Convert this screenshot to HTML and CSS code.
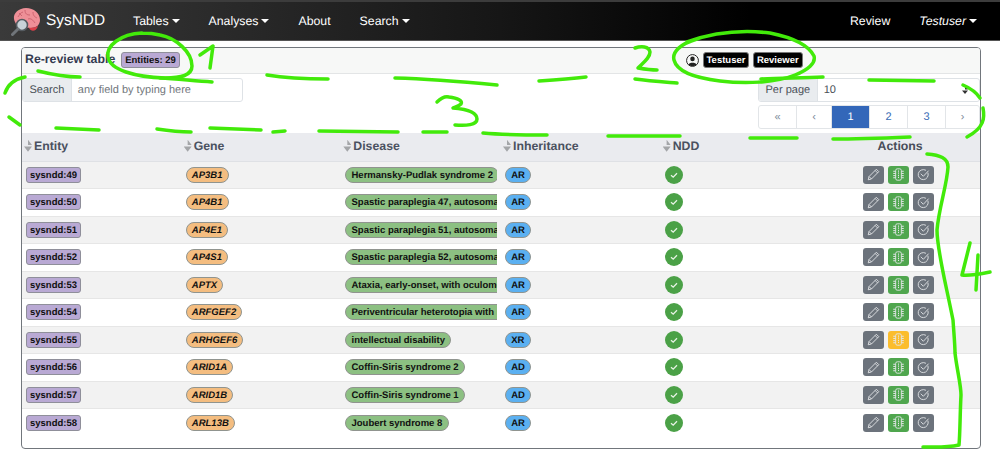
FILE: index.html
```html
<!DOCTYPE html>
<html lang="en">
<head>
<meta charset="UTF-8" />
<meta name="viewport" content="width=device-width, initial-scale=1" />
<title>SysNDD - Re-review table</title>
<link rel="stylesheet" href="styles.css">
</head>
<body>

<svg class="icon-defs" width="0" height="0">
  <symbol id="pencil" viewBox="0 0 16 16">
    <path d="M11.5 1.5 14.5 4.5 5.5 13.5 1.5 14.5 2.5 10.5Z M2.5 10.5 5.5 13.5 M10 3 13 6" fill="none" stroke="currentColor" stroke-width="1.1" stroke-linejoin="round"/>
  </symbol>
  <symbol id="chip" viewBox="0 0 16 16">
    <rect x="4.5" y="1" width="7" height="14" rx="2" fill="none" stroke="currentColor" stroke-width="1.1"/>
    <path d="M8 3V13" stroke="currentColor" stroke-width="1.3" stroke-dasharray="1.5 1.1"/>
    <path d="M1.5 4H4.5 M1.5 6.7H4.5 M1.5 9.4H4.5 M1.5 12H4.5 M11.5 4H14.5 M11.5 6.7H14.5 M11.5 9.4H14.5 M11.5 12H14.5" stroke="currentColor" stroke-width="1.2"/>
  </symbol>
  <symbol id="checkcircle" viewBox="0 0 16 16">
    <path d="M13.6 6.2A6.2 6.2 0 1 1 10.6 2.6" fill="none" stroke="currentColor" stroke-width="1.1" stroke-linecap="round"/>
    <path d="M5 7.4 7.8 10.2 14 3.6" fill="none" stroke="currentColor" stroke-width="1.1" stroke-linecap="round"/>
  </symbol>
  <symbol id="tick" viewBox="0 0 18 18">
    <circle cx="9" cy="9" r="9" fill="#4ba147"/>
    <path d="M6 9.2 8.2 11.2 12 7.2" fill="none" stroke="#e8f3e6" stroke-width="1.3"/>
  </symbol>
</svg>

<nav class="navbar">
  <a class="brand">
    <svg class="logo" viewBox="0 0 30 30" width="30" height="30">
      <path d="M3 13C2 7 8 2 15 2 23 2 29 7 29 14 29 19 25 22 20 22L11 21C7 21 4 18 3 13Z" fill="#ee8f97"/>
      <path d="M18 22C20 26 25 26 27 20 25 21 21 22 18 22Z" fill="#d8404a"/>
      <path d="M7 11C9 8 9 7 12 6M14 4C14 8 16 9 19 9M22 6C22 10 24 11 26 12M17 13C20 12 22 14 24 17M8 7 11 10" fill="none" stroke="#c8606c" stroke-width="0.9"/>
      <circle cx="11" cy="19" r="5.5" fill="#c8d2d8" stroke="#555b60" stroke-width="1.6"/>
      <path d="M7 23 1.5 28.5" stroke="#70757a" stroke-width="3" stroke-linecap="round"/>
    </svg>
    <span>SysNDD</span>
  </a>
  <ul class="nav-left">
    <li class="caret">Tables</li>
    <li class="caret">Analyses</li>
    <li>About</li>
    <li class="caret">Search</li>
  </ul>
  <ul class="nav-right">
    <li>Review</li>
    <li class="caret user">Testuser</li>
  </ul>
</nav>

<main class="page">
  <section class="card">
    <header class="card-head">
      <div class="title">
        <h6>Re-review table</h6>
        <span class="badge purple">Entities: 29</span>
      </div>
      <div class="who">
        <svg class="person" viewBox="0 0 16 16" width="13" height="13">
          <circle cx="8" cy="8" r="7.3" fill="none" stroke="#222" stroke-width="1.2"/>
          <circle cx="8" cy="6" r="2.8" fill="#222"/>
          <path d="M3 13C4 10 12 10 13 13 11 15.5 5 15.5 3 13Z" fill="#222"/>
        </svg>
        <span class="badge black">Testuser</span>
        <span class="badge black">Reviewer</span>
      </div>
    </header>

    <div class="controls">
      <div class="input-group search">
        <span class="addon">Search</span>
        <span class="field placeholder">any field by typing here</span>
      </div>
      <div class="paging">
        <div class="input-group">
          <span class="addon">Per page</span>
          <span class="field select">10</span>
        </div>
        <ul class="pagination">
          <li class="muted">«</li>
          <li class="muted">‹</li>
          <li class="active">1</li>
          <li>2</li>
          <li>3</li>
          <li class="muted">›</li>
        </ul>
      </div>
    </div>

    <table class="entities">
      <thead>
        <tr>
          <th><span class="sort">Entity</span></th>
          <th><span class="sort">Gene</span></th>
          <th><span class="sort">Disease</span></th>
          <th><span class="sort">Inheritance</span></th>
          <th><span class="sort">NDD</span></th>
          <th class="center">Actions</th>
        </tr>
      </thead>
      <tbody>
        <tr>
          <td><span class="badge purple">sysndd:49</span></td>
          <td><span class="pill orange">AP3B1</span></td>
          <td><div class="clip"><span class="pill green">Hermansky-Pudlak syndrome 2</span></div></td>
          <td><span class="pill blue">AR</span></td>
          <td><svg class="tick"><use href="#tick"/></svg></td>
          <td class="center"><div class="actions"><span class="btn gray"><svg><use href="#pencil"/></svg></span><span class="btn ok"><svg><use href="#chip"/></svg></span><span class="btn gray"><svg><use href="#checkcircle"/></svg></span></div></td>
        </tr>
        <tr>
          <td><span class="badge purple">sysndd:50</span></td>
          <td><span class="pill orange">AP4B1</span></td>
          <td><div class="clip"><span class="pill green">Spastic paraplegia 47, autosomal recessive</span></div></td>
          <td><span class="pill blue">AR</span></td>
          <td><svg class="tick"><use href="#tick"/></svg></td>
          <td class="center"><div class="actions"><span class="btn gray"><svg><use href="#pencil"/></svg></span><span class="btn ok"><svg><use href="#chip"/></svg></span><span class="btn gray"><svg><use href="#checkcircle"/></svg></span></div></td>
        </tr>
        <tr>
          <td><span class="badge purple">sysndd:51</span></td>
          <td><span class="pill orange">AP4E1</span></td>
          <td><div class="clip"><span class="pill green">Spastic paraplegia 51, autosomal recessive</span></div></td>
          <td><span class="pill blue">AR</span></td>
          <td><svg class="tick"><use href="#tick"/></svg></td>
          <td class="center"><div class="actions"><span class="btn gray"><svg><use href="#pencil"/></svg></span><span class="btn ok"><svg><use href="#chip"/></svg></span><span class="btn gray"><svg><use href="#checkcircle"/></svg></span></div></td>
        </tr>
        <tr>
          <td><span class="badge purple">sysndd:52</span></td>
          <td><span class="pill orange">AP4S1</span></td>
          <td><div class="clip"><span class="pill green">Spastic paraplegia 52, autosomal recessive</span></div></td>
          <td><span class="pill blue">AR</span></td>
          <td><svg class="tick"><use href="#tick"/></svg></td>
          <td class="center"><div class="actions"><span class="btn gray"><svg><use href="#pencil"/></svg></span><span class="btn ok"><svg><use href="#chip"/></svg></span><span class="btn gray"><svg><use href="#checkcircle"/></svg></span></div></td>
        </tr>
        <tr>
          <td><span class="badge purple">sysndd:53</span></td>
          <td><span class="pill orange">APTX</span></td>
          <td><div class="clip"><span class="pill green">Ataxia, early-onset, with oculomotor apraxia</span></div></td>
          <td><span class="pill blue">AR</span></td>
          <td><svg class="tick"><use href="#tick"/></svg></td>
          <td class="center"><div class="actions"><span class="btn gray"><svg><use href="#pencil"/></svg></span><span class="btn ok"><svg><use href="#chip"/></svg></span><span class="btn gray"><svg><use href="#checkcircle"/></svg></span></div></td>
        </tr>
        <tr>
          <td><span class="badge purple">sysndd:54</span></td>
          <td><span class="pill orange">ARFGEF2</span></td>
          <td><div class="clip"><span class="pill green">Periventricular heterotopia with microcephaly</span></div></td>
          <td><span class="pill blue">AR</span></td>
          <td><svg class="tick"><use href="#tick"/></svg></td>
          <td class="center"><div class="actions"><span class="btn gray"><svg><use href="#pencil"/></svg></span><span class="btn ok"><svg><use href="#chip"/></svg></span><span class="btn gray"><svg><use href="#checkcircle"/></svg></span></div></td>
        </tr>
        <tr>
          <td><span class="badge purple">sysndd:55</span></td>
          <td><span class="pill orange">ARHGEF6</span></td>
          <td><div class="clip"><span class="pill green">intellectual disability</span></div></td>
          <td><span class="pill blue">XR</span></td>
          <td><svg class="tick"><use href="#tick"/></svg></td>
          <td class="center"><div class="actions"><span class="btn gray"><svg><use href="#pencil"/></svg></span><span class="btn warn"><svg><use href="#chip"/></svg></span><span class="btn gray"><svg><use href="#checkcircle"/></svg></span></div></td>
        </tr>
        <tr>
          <td><span class="badge purple">sysndd:56</span></td>
          <td><span class="pill orange">ARID1A</span></td>
          <td><div class="clip"><span class="pill green">Coffin-Siris syndrome 2</span></div></td>
          <td><span class="pill blue">AD</span></td>
          <td><svg class="tick"><use href="#tick"/></svg></td>
          <td class="center"><div class="actions"><span class="btn gray"><svg><use href="#pencil"/></svg></span><span class="btn ok"><svg><use href="#chip"/></svg></span><span class="btn gray"><svg><use href="#checkcircle"/></svg></span></div></td>
        </tr>
        <tr>
          <td><span class="badge purple">sysndd:57</span></td>
          <td><span class="pill orange">ARID1B</span></td>
          <td><div class="clip"><span class="pill green">Coffin-Siris syndrome 1</span></div></td>
          <td><span class="pill blue">AD</span></td>
          <td><svg class="tick"><use href="#tick"/></svg></td>
          <td class="center"><div class="actions"><span class="btn gray"><svg><use href="#pencil"/></svg></span><span class="btn ok"><svg><use href="#chip"/></svg></span><span class="btn gray"><svg><use href="#checkcircle"/></svg></span></div></td>
        </tr>
        <tr>
          <td><span class="badge purple">sysndd:58</span></td>
          <td><span class="pill orange">ARL13B</span></td>
          <td><div class="clip"><span class="pill green">Joubert syndrome 8</span></div></td>
          <td><span class="pill blue">AR</span></td>
          <td><svg class="tick"><use href="#tick"/></svg></td>
          <td class="center"><div class="actions"><span class="btn gray"><svg><use href="#pencil"/></svg></span><span class="btn ok"><svg><use href="#chip"/></svg></span><span class="btn gray"><svg><use href="#checkcircle"/></svg></span></div></td>
        </tr>
      </tbody>
    </table>
  </section>
</main>

<!-- hand drawn marker scribbles on top of the screenshot -->
<svg class="scribbles" viewBox="0 0 1000 474" width="1000" height="474">
  <path d="M142 33C120 34 106 46 108 57 110 70 135 77 165 78 180 78 192 76 192 66 192 52 176 38 160 35 152 33 146 33 142 33"/>
  <path d="M200 55 213 46 210 68"/>
  <path d="M38 71C50 74 65 77 80 77"/>
  <path d="M160 78C178 79 195 81 212 82"/>
  <path d="M267 75C285 78 308 79 328 79"/>
  <path d="M395 78C430 79 465 82 497 85"/>
  <path d="M25 77C15 79 8 84 5 93"/>
  <path d="M9 117 20 125"/>
  <path d="M56 128 99 130"/>
  <path d="M157 129C170 131 180 132 191 132"/>
  <path d="M210 128 261 130"/>
  <path d="M273 132 285 131"/>
  <path d="M319 131 398 132"/>
  <path d="M423 132 447 132"/>
  <path d="M483 133C505 135 525 135 547 135"/>
  <path d="M608 136 680 136"/>
  <path d="M750 138 797 138"/>
  <path d="M833 139C860 139 885 138 910 137"/>
  <path d="M437 102C441 98 445 96 449 97 458 98 463 101 461 104 459 106 455 107 453 108 465 109 477 112 477 119 477 125 466 126 455 125"/>
  <path d="M539 81C555 80 570 79 586 77"/>
  <path d="M635 79C650 81 665 82 677 83"/>
  <path d="M761 79C780 78 800 78 823 77"/>
  <path d="M869 80 934 81"/>
  <path d="M963 85C970 88 976 92 980 98"/>
  <path d="M983 108C985 118 984 128 967 137"/>
  <path d="M697 39C680 44 672 52 674 60 677 72 695 78 720 81 745 84 775 83 795 75 808 70 816 63 814 56 808 44 790 37 770 33 745 30 715 32 687 42"/>
  <path d="M635 48C641 46 649 46 650 52 650 58 643 63 638 68 644 69 650 70 657 70"/>
  <path d="M927 154C940 155 948 158 948 167 947 185 939 207 937 230 937 250 945 280 953 320 954 335 955 345 955 353 957 370 961 385 961 395 960 415 960 435 959 445 945 448 935 447 923 447"/>
  <path d="M970 243 962 275C970 276 980 274 990 272"/>
  <path d="M978 255 976 290"/>
</svg>

</body>
</html>
```

FILE: styles.css
```css
* {
  box-sizing: border-box;
}
html, body {
  margin: 0;
  height: 474px;
  overflow: hidden;
}
body {
  position: relative;
  font-family: "Liberation Sans", Arial, sans-serif;
  font-size: 12.3px;
  color: #212529;
  background: white;
  text-rendering: geometricPrecision;
}
ul {
  list-style: none;
  margin: 0;
  padding: 0;
}
.icon-defs {
  position: absolute;
}

/* navbar */
.navbar {
  display: flex;
  align-items: center;
  height: 41px;
  padding: 0 23px 0 11px;
  color: white;
  background: linear-gradient(90deg, #3a3a3a 0%, #161616 50%, #000 75%);
  border-top: 2px solid #3c3c3c;
  border-bottom: 1px solid #555;
}
.brand {
  display: flex;
  align-items: center;
  gap: 5px;
  font-size: 15.4px;
  width: 122px;
}
.nav-left, .nav-right {
  display: flex;
  gap: 29px;
}
.nav-right {
  margin-left: auto;
}
.caret::after {
  content: "";
  display: inline-block;
  margin-left: 3px;
  vertical-align: 2px;
  border-top: 4px solid white;
  border-left: 4px solid transparent;
  border-right: 4px solid transparent;
}
.user {
  font-style: italic;
}

/* card */
.page {
  padding: 6px 19px 0 21px;
}
.card {
  height: 402px;
  border: 1px solid #71767c;
  border-radius: 4px;
  overflow: hidden;
}
.card-head {
  display: flex;
  align-items: flex-start;
  height: 26px;
  background: #f7f8f7;
  border-bottom: 1px solid #e3e5e6;
  padding: 4px 0 0 3px;
}
.title {
  display: flex;
  align-items: center;
  gap: 6px;
  width: 661px;
}
h6 {
  margin: -2px 0 0;
  font-size: 12.3px;
  font-weight: bold;
  color: #343a50;
}
.who {
  display: flex;
  align-items: center;
  gap: 3.5px;
}

.badge {
  display: inline-block;
  font-size: 9.5px;
  font-weight: bold;
  line-height: 15px;
  height: 16px;
  padding: 0 3px;
  border: 1px solid #8f8f9a;
  border-radius: 3px;
  color: #111;
}
.purple {
  background: #b9a9d4;
}
.black {
  background: black;
  color: white;
  border-color: #777;
}

/* search, per page, pagination */
.controls {
  display: flex;
  justify-content: space-between;
  align-items: flex-start;
  height: 59px;
  padding-top: 4px;
}
.input-group {
  display: flex;
  height: 24px;
  border: 1px solid #dee2e6;
  border-radius: 3px;
  overflow: hidden;
  line-height: 22px;
  font-size: 11px;
}
.search {
  width: 221px;
}
.addon {
  padding: 0 6.5px;
  background: #e9ecef;
  border-right: 1px solid #dee2e6;
  color: #495057;
}
.field {
  flex: 1;
  padding: 0 6px;
  color: #495057;
}
.placeholder {
  color: #72777c;
}
.select {
  position: relative;
}
.select::after {
  content: "";
  position: absolute;
  top: 7px;
  right: 11px;
  width: 6px;
  height: 8px;
  background: #333;
  clip-path: polygon(50% 0, 100% 44%, 0 44%, 50% 44%, 50% 56%, 100% 56%, 50% 100%, 0 56%, 50% 56%, 50% 44%);
}
.paging {
  width: 222px;
  display: flex;
  flex-direction: column;
  gap: 3px;
}
.pagination {
  display: grid;
  grid-template-columns: 37px 35px 38px 38px 38px 1fr;
  height: 24px;
  line-height: 22px;
  text-align: center;
  font-size: 11px;
  color: #3a6db5;
  border: 1px solid #e2e5e8;
  border-radius: 3px;
}
.pagination li + li {
  border-left: 1px solid #e2e5e8;
}
.pagination .muted {
  color: #7d8a99;
}
.pagination .active {
  background: #3367b9;
  color: white;
}

/* table */
.entities {
  width: 100%;
  table-layout: fixed;
  border-collapse: collapse;
}
th {
  height: 28px;
  padding: 0 0 2px 2px;
  text-align: left;
  font-size: 12.3px;
  color: #4a5160;
  background: #eaebef;
  border-bottom: 1px solid #dfe1e5;
}
th.center {
  padding: 0 0 2px;
  color: #474d59;
}
.sort::before {
  content: "";
  display: inline-block;
  width: 8px;
  height: 12px;
  margin-right: 2px;
  vertical-align: -2px;
  background: #a3a5a8;
  clip-path: polygon(50% 0, 100% 44%, 0 44%, 50% 44%, 50% 56%, 100% 56%, 50% 100%, 0 56%, 50% 56%, 50% 44%);
}
td {
  height: 27.5px;
  padding: 0 0 0 4px;
  border-bottom: 1px solid #e6e6e6;
  vertical-align: middle;
}
td > .badge, td > .pill {
  display: block;
  width: fit-content;
}
tbody tr:nth-child(odd) td {
  background: #f2f2f2;
}
tbody tr:last-child td {
  border-bottom: 0;
}
.center {
  text-align: center;
}
td.center {
  padding: 0 3px 0 0;
}

.pill {
  display: inline-block;
  flex-shrink: 0;
  height: 16px;
  line-height: 15px;
  font-size: 9.5px;
  font-weight: bold;
  padding: 0 5.2px;
  border: 1px solid #90948f;
  border-radius: 8px;
  color: #111;
  white-space: nowrap;
}
.orange {
  background: #f4bd80;
  font-style: italic;
}
.green {
  background: #8cc082;
}
.blue {
  background: #5bb0f1;
}
.clip {
  width: 152px;
  overflow: hidden;
  display: flex;
}
.tick {
  display: block;
  width: 18px;
  height: 18px;
}

.actions {
  display: flex;
  justify-content: center;
  gap: 3.5px;
}
.btn {
  display: flex;
  align-items: center;
  justify-content: center;
  width: 21.5px;
  height: 18px;
  border-radius: 3px;
  color: #e4e6e8;
}
.btn svg {
  width: 13px;
  height: 13px;
}
.gray {
  background: #6c737c;
}
.ok {
  background: #4fa64e;
}
.warn {
  background: #fbbd2d;
}

/* marker scribbles */
.scribbles {
  position: absolute;
  left: 0;
  top: 0;
  pointer-events: none;
}
.scribbles path {
  fill: none;
  stroke: #42ea0a;
  stroke-width: 3.5;
  stroke-linecap: round;
  stroke-linejoin: round;
}
```
